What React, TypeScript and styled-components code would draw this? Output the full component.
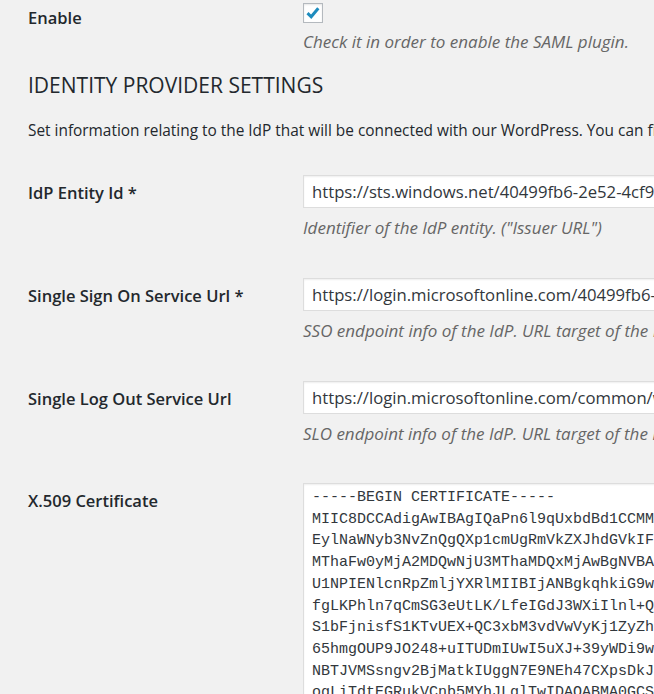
import React from "react";
import styled, { createGlobalStyle } from "styled-components";

const Global = createGlobalStyle`
  html, body {
    margin: 0;
    padding: 0;
    background: #f1f1f1;
    overflow: hidden;
  }
  body {
    font-family: "Open Sans", "Noto Sans", sans-serif;
    color: #23282d;
  }
`;

const Page = styled.div`
  width: 654px;
  height: 694px;
  overflow: hidden;
  padding-left: 28px;
  box-sizing: border-box;
`;

const Row = styled.div<{ $top?: number; $bottom?: number }>`
  display: flex;
  align-items: flex-start;
  padding-top: ${(p) => (p.$top !== undefined ? p.$top : 18)}px;
  padding-bottom: ${(p) => (p.$bottom !== undefined ? p.$bottom : 19)}px;
`;

const Label = styled.div<{ $pad?: number }>`
  flex: none;
  width: 275px;
  padding-top: ${(p) => (p.$pad !== undefined ? p.$pad : 6)}px;
  font-size: 16.5px;
  font-weight: 600;
  line-height: 23px;
  white-space: nowrap;
`;

const Field = styled.div`
  flex: 1;
  min-width: 0;
`;

const Check = styled.span`
  display: block;
  width: 20px;
  height: 20px;
  margin-top: 3px;
  box-sizing: border-box;
  border: 1px solid #b4b9be;
  background: #fff;
  box-shadow: inset 0 1px 2px rgba(0, 0, 0, 0.1);
`;

const Description = styled.p<{ $gap?: number }>`
  margin: ${(p) => (p.$gap !== undefined ? p.$gap : 7)}px 0 0;
  font-size: 17px;
  line-height: 26px;
  font-style: italic;
  color: #666;
  white-space: nowrap;
`;

const Heading = styled.h2`
  margin: 17px 0 0;
  font-size: 21px;
  font-weight: 400;
  line-height: 27px;
  color: #23282d;
`;

const Intro = styled.p`
  margin: 20px 0 14px;
  font-size: 15.4px;
  line-height: 24px;
  white-space: nowrap;
`;

const TextInput = styled.input`
  display: block;
  width: 520px;
  height: 33px;
  box-sizing: border-box;
  padding: 0 8px;
  margin: 0;
  border: 1px solid #ddd;
  box-shadow: inset 0 1px 2px rgba(0, 0, 0, 0.07);
  background: #fff;
  color: #32373c;
  font-family: "Open Sans", "Noto Sans", sans-serif;
  font-size: 16.7px;
  outline: none;
`;

const CertBox = styled.textarea`
  display: block;
  width: 560px;
  height: 260px;
  box-sizing: border-box;
  margin: 0;
  padding: 3px 8px;
  border: 1px solid #ddd;
  box-shadow: inset 0 1px 2px rgba(0, 0, 0, 0.07);
  background: #fff;
  color: #32373c;
  font-family: "Liberation Mono", "Courier New", monospace;
  font-size: 15px;
  line-height: 21.7px;
  white-space: pre;
  overflow: hidden;
  resize: none;
  outline: none;
`;

const cert = [
  "-----BEGIN CERTIFICATE-----",
  "MIIC8DCCAdigAwIBAgIQaPn6l9qUxbdBd1CCMMoZrzANBgkqhkiG9w0BAQsFADA0",
  "EylNaWNyb3NvZnQgQXp1cmUgRmVkZXJhdGVkIFNTTyBDZXJ0aWZpY2F0ZTAeFw0x",
  "MThaFw0yMjA2MDQwNjU3MThaMDQxMjAwBgNVBAMTKU1pY3Jvc29mdCBBenVyZSBG",
  "U1NPIENlcnRpZmljYXRlMIIBIjANBgkqhkiG9w0BAQEFAAOCAQ8AMIIBCgKCAQEA",
  "fgLKPhln7qCmSG3eUtLK/LfeIGdJ3WXiIlnl+Q2x8yVb0wHn4Pq7oRlKd1s6Tg3A",
  "S1bFjnisfS1KTvUEX+QC3xbM3vdVwVyKj1ZyZhN0pT5aG8u2WcLmR4eQ7vDi9xHb",
  "65hmgOUP9JO248+uITUDmIUwI5uXJ+39yWDi9wKs3bZr0FqT8Lp2NvE1aYc5GhOd",
  "NBTJVMSsngv2BjMatkIUggN7E9NEh47CXpsDkJx0Wq9Rt3mLa2bZcVf6YuO1PnHs",
  "ogLiTdtEGRukVCnb5MYhJLglTwIDAQABMA0GCSqGSIb3DQEBCwUAA4IBAQBq2Kf0",
].join("\n");

const CheckMark = () => (
  <svg width="18" height="18" viewBox="0 0 18 18">
    <path d="M3.5 9.2 L7.2 12.8 L14.3 4.3" fill="none" stroke="#1e8cbe" strokeWidth="3" strokeLinecap="butt" />
  </svg>
);

const fields = [
  {
    label: "IdP Entity Id *",
    value: "https://sts.windows.net/40499fb6-2e52-4cf9-9a7d-1f2c3b4a5e6d/",
    note: 'Identifier of the IdP entity. ("Issuer URL")',
  },
  {
    label: "Single Sign On Service Url *",
    value: "https://login.microsoftonline.com/40499fb6-2e52-4cf9-9a7d-1f2c3b4a5e6d/saml2",
    note: "SSO endpoint info of the IdP. URL target of the IdP where the SP will send the Authentication Request.",
  },
  {
    label: "Single Log Out Service Url",
    value: "https://login.microsoftonline.com/common/wsfederation?wa=wsignout1.0",
    note: "SLO endpoint info of the IdP. URL target of the IdP where the SP will send the SLO Request.",
  },
];

const App = () => (
  <>
    <Global />
    <Page>
      <Row $top={0} $bottom={0}>
        <Label $pad={6}>Enable</Label>
        <Field>
          <Check>
            <CheckMark />
          </Check>
          <Description $gap={6}>Check it in order to enable the SAML plugin.</Description>
        </Field>
      </Row>
      <Heading>IDENTITY PROVIDER SETTINGS</Heading>
      <Intro>
        Set information relating to the IdP that will be connected with our WordPress. You can find this values in the IdP's metadata.
      </Intro>
      {fields.map((f) => (
        <Row key={f.label}>
          <Label>{f.label}</Label>
          <Field>
            <TextInput readOnly value={f.value} />
            <Description>{f.note}</Description>
          </Field>
        </Row>
      ))}
      <Row $top={17}>
        <Label>X.509 Certificate</Label>
        <Field>
          <CertBox readOnly wrap="off" value={cert} />
        </Field>
      </Row>
    </Page>
  </>
);

export default App;
